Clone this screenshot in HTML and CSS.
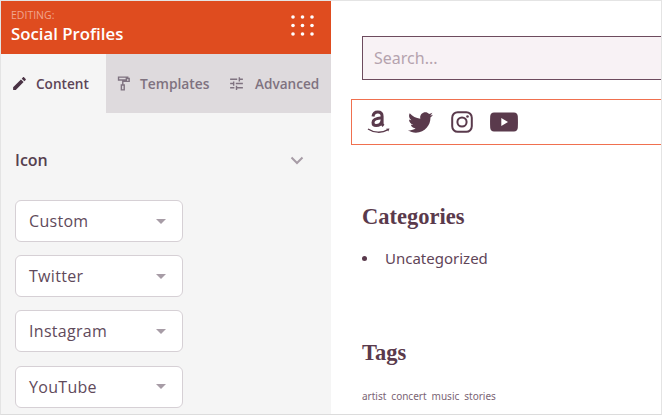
FILE: index.html
```html
<!DOCTYPE html>
<html lang="en">

<head>
    <meta charset="UTF-8">
    <meta name="viewport" content="width=device-width, initial-scale=1.0">
    <title>Social Profiles</title>

    <link rel="stylesheet" href="styles.css">
</head>

<body>
    <div class="page">
        <div class="panel">
            <div class="panel-head">
                <div>
                    <div class="head-small">EDITING:</div>
                    <div class="head-title">Social Profiles</div>
                </div>
                <svg class="dots" viewBox="0 0 24 24">
                    <circle cx="2" cy="2" r="1.8" /><circle cx="11.5" cy="2" r="1.8" /><circle cx="21" cy="2" r="1.8" />
                    <circle cx="2" cy="10.5" r="1.8" /><circle cx="11.5" cy="10.5" r="1.8" /><circle cx="21" cy="10.5" r="1.8" />
                    <circle cx="2" cy="19" r="1.8" /><circle cx="11.5" cy="19" r="1.8" /><circle cx="21" cy="19" r="1.8" />
                </svg>
            </div>
            <div class="tabs">
                <div class="tab tab-active">
                    <svg class="tab-icon" viewBox="0 0 24 24"><path d="M3 17.25V21h3.75L17.81 9.94l-3.75-3.75L3 17.25zM20.71 7.04c.39-.39.39-1.02 0-1.41l-2.34-2.34c-.39-.39-1.02-.39-1.41 0l-1.83 1.83 3.75 3.75 1.83-1.83z" /></svg>
                    Content
                </div>
                <div class="tab tab-templates">
                    <svg class="tab-icon" viewBox="0 0 24 24"><path fill-rule="evenodd" d="M4 2h15v2h2v6H12v3h2v9H8v-9h2V8h9V6h-2v2H4zm2 2v2h9V4zm4 11v5h2v-5z" /></svg>
                    Templates
                </div>
                <div class="tab tab-advanced">
                    <svg class="tab-icon" viewBox="0 0 24 24"><path d="M3 17v2h6v-2H3zM3 5v2h10V5H3zm10 16v-2h8v-2h-8v-2h-2v6h2zM7 9v2H3v2h4v2h2V9H7zm14 4v-2H11v2h10zm-6-4h2V7h4V5h-4V3h-2v6z" /></svg>
                    Advanced
                </div>
            </div>
            <div class="section">
                <div class="section-head">
                    <span>Icon</span>
                    <svg class="chevron" viewBox="0 0 14 9"><path d="M1.5 1.5 7 7l5.5-5.5" /></svg>
                </div>
                <div class="select">Custom<span class="caret"></span></div>
                <div class="select">Twitter<span class="caret"></span></div>
                <div class="select">Instagram<span class="caret"></span></div>
                <div class="select">YouTube<span class="caret"></span></div>
            </div>
        </div>

        <div class="preview">
            <div class="search">Search...</div>
            <div class="social">
                <svg class="ic-amazon" viewBox="0 0 24 26">
                    <path class="ic-line" d="M7 7.500C7.400 4.400 9.200 3 11.800 3c2.900 0 4.300 1.500 4.300 4.200v7.400c0 1 .5 1.600 1.400 2.300M16 8.800c-5 .4-9 1.200-9 4.600 0 2 1.300 3.100 3.100 3.100 2.800 0 5.200-1.900 5.900-4.700" />
                    <path class="ic-thin" d="M2 20c6 4 14 4.200 19.500.8" />
                    <path d="M23.500 19.500l-3.400.2 2.200 2.900z" />
                </svg>
                <svg class="ic-twitter" viewBox="0 0 512 512"><path d="M459.37 151.716c.325 4.548.325 9.097.325 13.645 0 138.72-105.583 298.558-298.558 298.558-59.452 0-114.68-17.219-161.137-47.106 8.447.974 16.568 1.299 25.34 1.299 49.055 0 94.213-16.568 130.274-44.832-46.132-.975-84.792-31.188-98.112-72.772 6.498.974 12.995 1.624 19.818 1.624 9.421 0 18.843-1.3 27.614-3.573-48.081-9.747-84.143-51.98-84.143-102.985v-1.299c13.969 7.797 30.214 12.67 47.431 13.319-28.264-18.843-46.781-51.005-46.781-87.391 0-19.492 5.197-37.36 14.294-52.954 51.655 63.675 129.3 105.258 216.365 109.807-1.624-7.797-2.599-15.918-2.599-24.04 0-57.828 46.782-104.934 104.934-104.934 30.213 0 57.502 12.67 76.67 33.137 23.715-4.548 46.456-13.32 66.599-25.34-7.798 24.366-24.366 44.833-46.132 57.827 21.117-2.273 41.584-8.122 60.426-16.243-14.292 20.791-32.161 39.308-52.628 54.253z" /></svg>
                <svg class="ic-instagram" viewBox="0 0 22 22">
                    <rect class="ic-thin-2" x="1.200" y="1.200" width="19.600" height="19.600" rx="5.500" />
                    <circle class="ic-thin-2" cx="11" cy="11" r="4.600" />
                    <circle cx="16.500" cy="5.500" r="1.300" />
                </svg>
                <svg class="ic-youtube" viewBox="0 0 28 20"><path fill-rule="evenodd" d="M4 0.500h20c2.200 0 3.700 1.500 3.800 3.700.2 3.800.2 7.800 0 11.600-.1 2.200-1.600 3.700-3.800 3.700H4C1.800 19.500.3 18 .2 15.800c-.2-3.800-.2-7.800 0-11.600C.3 2 1.800.5 4 .5zM11.300 6v8l6.700-4z" /></svg>
            </div>
            <h2 class="widget-title widget-categories">Categories</h2>
            <ul class="cat-list">
                <li>Uncategorized</li>
            </ul>
            <h2 class="widget-title widget-tags">Tags</h2>
            <div class="tags">
                <span>artist</span><span>concert</span><span>music</span><span>stories</span>
            </div>
        </div>
    </div>
</body>
</html>
```

FILE: styles.css
```css
* { box-sizing: border-box; }
html, body { margin: 0; height: 100%; background-color: #fff; }
body { font-family: "Open Sans", sans-serif; color: #5d3a4c; }

.page {
    display: flex;
    width: 662px;
    height: 415px;
    overflow: hidden;
    border: 1px solid #e4e4e4;
    border-bottom-color: #dcdcdc;
}

/* left panel */
.panel {
    width: 330px;
    flex-shrink: 0;
    background-color: #f5f5f5;
    box-shadow: 0 0 8px rgba(0, 0, 0, 0.12);
}

.panel-head {
    height: 53px;
    background-color: #df4c1f;
    color: #fff;
    display: flex;
    justify-content: space-between;
    padding: 8px 16px 0 10px;
}

.head-small { font-size: 10.5px; line-height: 12px; color: #f0a58f; }
.head-title { font-size: 16.8px; line-height: 22px; font-weight: 600; margin-top: 2px; }

.dots { width: 24px; height: 24px; margin-top: 6px; fill: #fff; }

.tabs { display: flex; height: 59px; background-color: #dedadd; }
.tab {
    display: flex;
    align-items: center;
    font-size: 14px;
    font-weight: 600;
    color: #7f7280;
}
.tab-active {
    width: 105px;
    background-color: #f5f5f5;
    color: #5d4558;
    padding-left: 10px;
    gap: 8px;
    font-size: 13.6px;
}
.tab-templates { width: 122px; padding-left: 9px; gap: 8px; font-size: 13.8px; }
.tab-advanced { gap: 10px; font-size: 13.6px; }
.tab-icon { width: 17px; height: 17px; fill: currentColor; }
.tab-active .tab-icon { fill: #4a3345; }

.section { padding: 36px 0 0 14px; }
.section-head {
    display: flex;
    justify-content: space-between;
    align-items: center;
    height: 22px;
    margin-bottom: 29px;
    padding-right: 27px;
    font-size: 16px;
    font-weight: 600;
    color: #55404f;
}
.chevron { width: 14px; height: 9px; fill: none; stroke: #a79ca6; stroke-width: 2; }

.select {
    display: flex;
    justify-content: space-between;
    align-items: center;
    width: 168px;
    height: 42px;
    margin-bottom: 13.2px;
    padding: 0 16px 0 13px;
    background-color: #fff;
    border: 1px solid #d6d0d5;
    border-radius: 6px;
    font-size: 16px;
    letter-spacing: 0.3px;
    color: #5f4a5b;
}
.caret {
    border-left: 5px solid transparent;
    border-right: 5px solid transparent;
    border-top: 5px solid #a79ca6;
}

/* right preview */
.preview { flex: 1; min-width: 0; padding-top: 35px; background-color: #fff; }

.search {
    height: 44px;
    margin-left: 31px;
    margin-right: -10px;
    padding: 0 11px;
    display: flex;
    align-items: center;
    background-color: #f8f2f5;
    border: 1px solid #6d4b5e;
    font-family: "Noto Sans", sans-serif;
    font-size: 16px;
    color: #b5a3ae;
}

.social {
    display: flex;
    align-items: center;
    height: 46px;
    margin: 19px -10px 0 20px;
    padding-left: 14px;
    border: 1px solid #f0704f;
}
.social svg { flex-shrink: 0; fill: #5a3a4c; }
.ic-amazon { width: 24px; height: 26px; margin-right: 18px; }
.ic-twitter { width: 25px; height: 25px; margin-right: 18px; }
.ic-instagram { width: 22px; height: 22px; margin-right: 17px; }
.ic-youtube { width: 28px; height: 20px; }
.social .ic-line { fill: none; stroke: #5a3a4c; stroke-width: 3; }
.social .ic-thin { fill: none; stroke: #5a3a4c; stroke-width: 1.4; }
.social .ic-thin-2 { fill: none; stroke: #5a3a4c; stroke-width: 2; }

.widget-title {
    margin: 0 0 0 31px;
    font-family: "Liberation Serif", serif;
    font-size: 22.500px;
    font-weight: 700;
    line-height: 28px;
    color: #5a3a4c;
}
.widget-categories { margin-top: 58px; }
.widget-tags { margin-top: 70px; }

.cat-list {
    list-style: none;
    margin: 16px 0 0 31px;
    padding: 0;
    font-family: "Noto Sans", sans-serif;
    font-size: 15px;
    line-height: 22px;
    color: #5f4558;
}
.cat-list li { display: flex; align-items: center; }
.cat-list li::before {
    content: "";
    width: 5px;
    height: 5px;
    margin-right: 18px;
    border-radius: 50%;
    background-color: #5a3a4c;
}

.tags {
    display: flex;
    gap: 5px;
    margin: 22px 0 0 31px;
    font-family: "Noto Sans", sans-serif;
    font-size: 10px;
    line-height: 14px;
    color: #7a6474;
}
```
